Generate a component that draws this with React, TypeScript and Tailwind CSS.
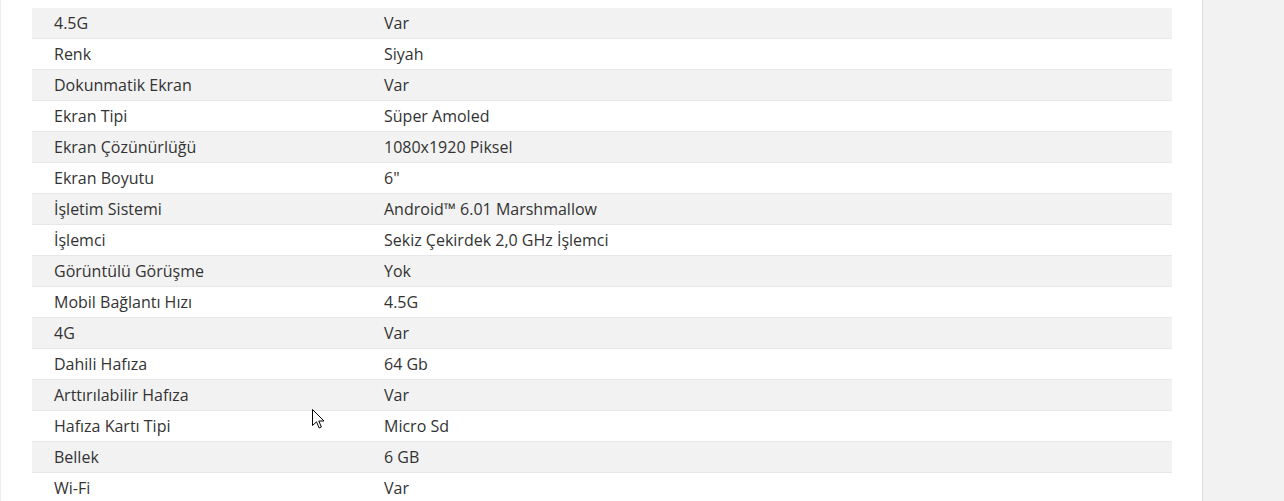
import React from "react";

const rows: [string, string][] = [
  ["4.5G", "Var"],
  ["Renk", "Siyah"],
  ["Dokunmatik Ekran", "Var"],
  ["Ekran Tipi", "Süper Amoled"],
  ["Ekran Çözünürlüğü", "1080x1920 Piksel"],
  ["Ekran Boyutu", "6\""],
  ["İşletim Sistemi", "Android™ 6.01 Marshmallow"],
  ["İşlemci", "Sekiz Çekirdek 2,0 GHz İşlemci"],
  ["Görüntülü Görüşme", "Yok"],
  ["Mobil Bağlantı Hızı", "4.5G"],
  ["4G", "Var"],
  ["Dahili Hafıza", "64 Gb"],
  ["Arttırılabilir Hafıza", "Var"],
  ["Hafıza Kartı Tipi", "Micro Sd"],
  ["Bellek", "6 GB"],
  ["Wi-Fi", "Var"],
];

export default function App() {
  return (
    <div
      className="relative flex h-[501px] w-[1284px] overflow-hidden bg-white text-[16px] text-[#333333]"
      style={{ fontFamily: '"Open Sans", "Liberation Sans", sans-serif' }}
    >
      <div className="w-[1202px] shrink-0 border-l border-[#ececec] pl-[31px] pt-[8px]">
        <div className="w-[1140px]">
          {rows.map(([k, v], i) => (
            <div
              key={i}
              className={`grid h-[31px] grid-cols-[330px_1fr] items-center border-b border-[#e8e8e8] ${
                i % 2 === 0 ? "bg-[#f2f2f2]" : "bg-white"
              }`}
            >
              <div className="pl-[22px] leading-[30px]">{k}</div>
              <div className="pl-[22px] leading-[30px]">{v}</div>
            </div>
          ))}
        </div>
      </div>
      <div className="flex-1 border-l border-[#dcdcdc] bg-[#f2f2f2]" />
      <svg
        className="absolute left-[312px] top-[409px]"
        width="13"
        height="20"
        viewBox="0 0 13 20"
      >
        <path
          d="M0.5 0.5 L0.5 16.5 L4.5 12.8 L7.2 19 L9.4 18 L6.8 12 L12 12 Z"
          fill="#ffffff"
          stroke="#000000"
          strokeWidth="1"
          strokeLinejoin="miter"
        />
      </svg>
    </div>
  );
}
